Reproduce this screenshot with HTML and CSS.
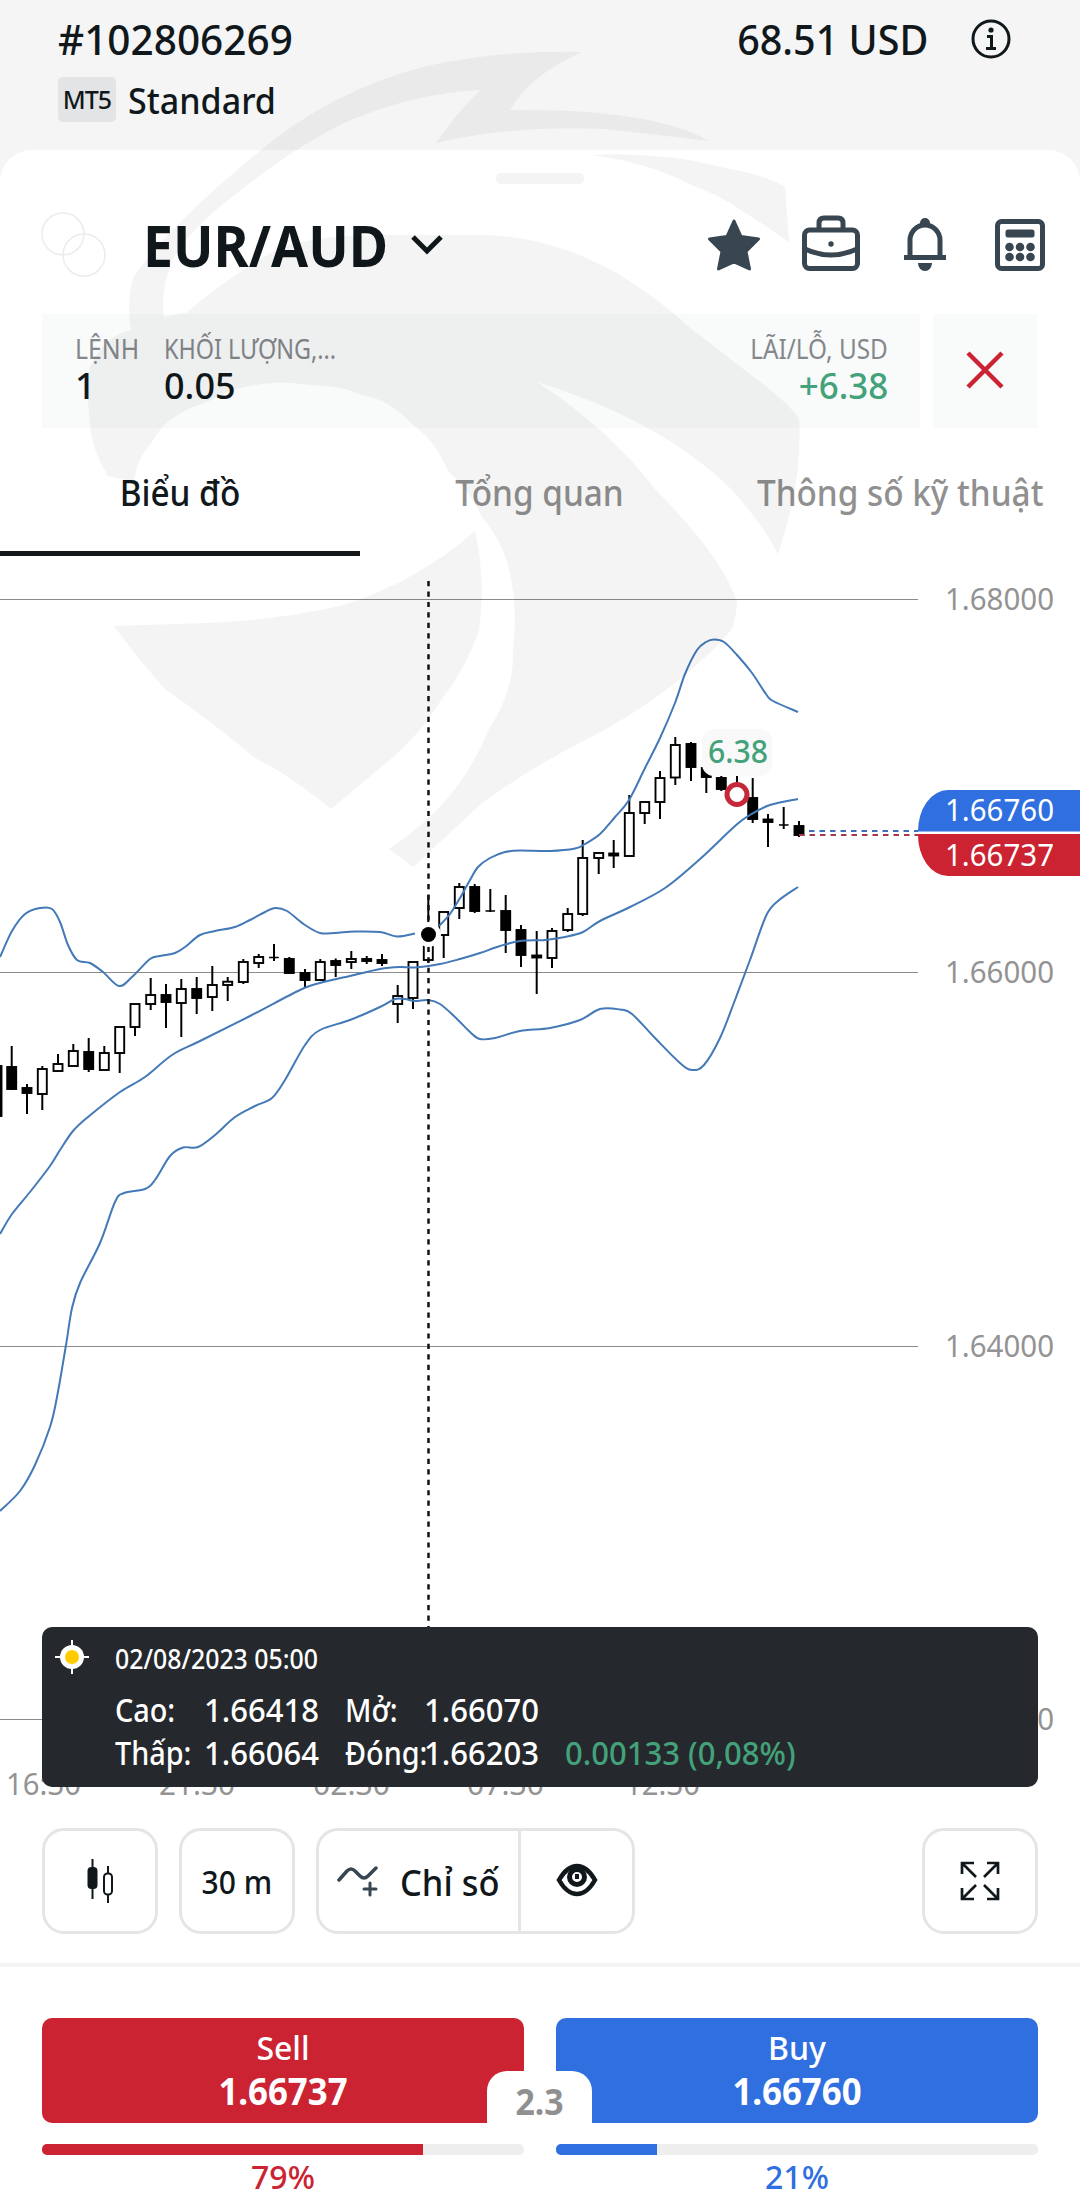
FILE: index.html
```
<!DOCTYPE html>
<html lang="vi">
<head>
  <meta charset="UTF-8">
  <meta name="viewport" content="width=device-width, initial-scale=1.0">
  <title>EUR/AUD</title>
  <link rel="stylesheet" href="styles.css">
</head>
<body>

<header class="account">
  <div class="account-row">
    <span class="account-id">#102806269</span>
    <span class="balance">68.51 USD</span>
    <svg class="info" width="40" height="40" viewBox="0 0 40 40">
      <circle cx="20" cy="20" r="18" fill="none" stroke="#10181c" stroke-width="3"/>
      <circle cx="20" cy="11" r="2.6" fill="#10181c"/>
      <path d="M16 17.5h4.5V29M15 29.5h10" fill="none" stroke="#10181c" stroke-width="3"/>
    </svg>
  </div>
  <div class="account-type">
    <span class="badge">MT5</span>
    <span class="type-name">Standard</span>
  </div>
</header>

<main class="sheet">
  <div class="handle"></div>

  <div class="pair">
    <svg class="flags" width="66" height="66" viewBox="0 0 66 66" fill="none" stroke="#ececec" stroke-width="1.5">
      <circle cx="22" cy="22" r="21"/>
      <circle cx="43" cy="43" r="21"/>
    </svg>
    <h1>EUR/AUD</h1>
    <svg class="chevron" width="32" height="22" viewBox="0 0 32 22">
      <path d="M2 3L16 17L30 3" fill="none" stroke="#10181c" stroke-width="5"/>
    </svg>
    <div class="pair-icons">
      <svg width="54" height="52" viewBox="0 0 54 52">
        <path d="M27 2L34 17.500L51.500 20L39 32.500L42.500 50L27 43L11.500 50L15 32.500L2.500 20L20 17.500Z" fill="#384651" stroke="#384651" stroke-width="3" stroke-linejoin="round"/>
      </svg>
      <svg width="58" height="56" viewBox="0 0 58 56" fill="none" stroke="#384651" stroke-width="5">
        <rect x="2.500" y="15" width="53" height="38.500" rx="5"/>
        <path d="M17 15V8q0-5 5-5h14q5 0 5 5v7M3 34q26 12 52 0"/>
        <circle cx="29" cy="29" r="2.700" fill="#384651" stroke="none"/>
      </svg>
      <svg width="42" height="54" viewBox="0 0 42 54">
        <path d="M6 38V22a15 15 0 0 1 30 0v16" fill="none" stroke="#384651" stroke-width="5"/>
        <path d="M0 37h42v5H0zM14 45h14a7 8 0 0 1-14 0zM16 8V5a5 5 0 0 1 10 0v3z" fill="#384651"/>
      </svg>
      <svg width="50" height="52" viewBox="0 0 50 52">
        <rect x="2.500" y="2.500" width="45" height="47" rx="4" fill="none" stroke="#384651" stroke-width="5"/>
        <rect x="10.500" y="10.500" width="29" height="8" rx="2.500" fill="#384651"/>
        <g fill="#384651">
          <circle cx="14.500" cy="28" r="4.300"/><circle cx="25" cy="28" r="4.300"/><circle cx="35.500" cy="28" r="4.300"/>
          <circle cx="14.500" cy="38" r="4.300"/><circle cx="25" cy="38" r="4.300"/><circle cx="35.500" cy="38" r="4.300"/>
        </g>
      </svg>
    </div>
  </div>

  <div class="orders">
    <div class="order-card">
      <div class="order-col col-count">
        <span class="label">LỆNH</span>
        <span class="value">1</span>
      </div>
      <div class="order-col col-volume">
        <span class="label">KHỐI LƯỢNG,...</span>
        <span class="value">0.05</span>
      </div>
      <div class="order-col profit">
        <span class="label">LÃI/LỖ, USD</span>
        <span class="value">+6.38</span>
      </div>
    </div>
    <button class="close-order">
      <svg width="40" height="40" viewBox="0 0 40 40">
        <path d="M3 3L37 37M37 3L3 37" stroke="#cb2331" stroke-width="4.500"/>
      </svg>
    </button>
  </div>

  <nav class="tabs">
    <a class="tab active"><span>Biểu đồ</span></a>
    <a class="tab"><span>Tổng quan</span></a>
    <a class="tab"><span>Thông số kỹ thuật</span></a>
  </nav>

  <div class="chart">
    <svg id="chart" width="1080" height="1254" viewBox="0 556 1080 1254">
      <g stroke="#8c8c8c" stroke-width="1">
        <path d="M0 599.500H918M0 972.500H918M0 1346.500H918M0 1719.500H918"/>
      </g>
      <g class="axis">
        <text x="945" y="610" textLength="109" lengthAdjust="spacingAndGlyphs">1.68000</text>
        <text x="945" y="983" textLength="109" lengthAdjust="spacingAndGlyphs">1.66000</text>
        <text x="945" y="1357" textLength="109" lengthAdjust="spacingAndGlyphs">1.64000</text>
        <text x="945" y="1730" textLength="109" lengthAdjust="spacingAndGlyphs">1.62000</text>
        <text x="6" y="1795" textLength="75" lengthAdjust="spacingAndGlyphs">16:30</text>
        <text x="159" y="1795" textLength="76" lengthAdjust="spacingAndGlyphs">21:30</text>
        <text x="313" y="1795" textLength="77" lengthAdjust="spacingAndGlyphs">02:30</text>
        <text x="467" y="1795" textLength="77" lengthAdjust="spacingAndGlyphs">07:30</text>
        <text x="625" y="1795" textLength="75" lengthAdjust="spacingAndGlyphs">12:30</text>
      </g>
      <g id="candles"></g>
      <g id="bands"></g>
      <path d="M428.500 581V1630" stroke="#111" stroke-width="2.500" stroke-dasharray="5.200 5.250"/>
      <circle cx="428.500" cy="934.500" r="12.500" fill="#fff"/>
      <circle cx="428.500" cy="934.500" r="7.500" fill="#000"/>
      <path d="M809 831H918" stroke="#3f6fb8" stroke-width="2" stroke-dasharray="5.500 5"/>
      <path d="M799 835H918" stroke="#a2384a" stroke-width="2" stroke-dasharray="5.500 5"/>
      <rect x="702" y="729" width="70" height="47" rx="12" fill="#f9f9f9"/>
      <text class="deal" x="708" y="763" textLength="60" lengthAdjust="spacingAndGlyphs">6.38</text>
      <circle cx="737" cy="794.500" r="10" fill="#fff" stroke="#c62839" stroke-width="5"/>
      <path d="M1080 790H948A30 41 0 0 0 918 831.500H1080Z" fill="#2f6fdf"/>
      <path d="M1080 834H918A30 41 0 0 0 948 876H1080Z" fill="#cb2331"/>
      <g class="price">
        <text x="945" y="821" textLength="109" lengthAdjust="spacingAndGlyphs">1.66760</text>
        <text x="945" y="866" textLength="109" lengthAdjust="spacingAndGlyphs">1.66737</text>
      </g>
    </svg>

    <div class="tooltip">
      <svg class="sun" width="36" height="36" viewBox="0 0 36 36">
        <path d="M18 1V35M1 18H35" stroke="#fff" stroke-width="2"/>
        <circle cx="18" cy="18" r="12" fill="#fff"/>
        <circle cx="18" cy="18" r="7" fill="#fc0"/>
      </svg>
      <div class="ohlc">
        <div class="date">02/08/2023 05:00</div>
        <div class="ohlc-grid">
          <span class="name">Cao:</span><span>1.66418</span><span class="name">Mở:</span><span>1.66070</span><span></span>
          <span class="name">Thấp:</span><span>1.66064</span><span class="name">Đóng:</span><span>1.66203</span><span class="change">0.00133 (0,08%)</span>
        </div>
      </div>
    </div>
  </div>

  <div class="toolbar">
    <button class="tool">
      <svg width="28" height="44" viewBox="0 0 28 44" fill="none" stroke="#10181c" stroke-width="2">
        <path d="M6.500 0V40M22 7V14M22 36V44"/>
        <rect x="2.500" y="9" width="8" height="20" rx="3" fill="#10181c"/>
        <rect x="18" y="14.500" width="8" height="21" rx="3.500"/>
      </svg>
    </button>
    <button class="tool"><span class="period">30 m</span></button>
    <div class="tool-group">
      <button class="indicators">
        <svg width="42" height="32" viewBox="0 0 42 32" fill="none" stroke="#384651" stroke-width="3.500" stroke-linecap="round">
          <path d="M2 15L10 6Q14 2 18 6L23 11Q27 15 31 11L39 3"/>
          <path d="M33 18V30M27 24H39" stroke-width="3"/>
        </svg>
        <span>Chỉ số</span>
      </button>
      <button class="eye">
        <svg width="42" height="34" viewBox="0 0 42 34">
          <path d="M3 17Q11 3 21 3T39 17Q31 31 21 31T3 17Z" fill="none" stroke="#10181c" stroke-width="4.500"/>
          <circle cx="21" cy="14" r="7.500" fill="none" stroke="#10181c" stroke-width="5"/>
          <path d="M21 11V16" stroke="#10181c" stroke-width="4"/>
        </svg>
      </button>
    </div>
    <button class="tool expand">
      <svg width="40" height="40" viewBox="0 0 40 40" fill="none" stroke="#10181c" stroke-width="2.700">
        <path d="M2 13V2H14M2 2L16 16M27 2H38V13M38 2L24 16M2 27V38H14M2 38L16 24M38 27V38H27M38 38L24 24"/>
      </svg>
    </button>
  </div>
</main>

<footer class="trade">
  <div class="trade-buttons">
    <button class="sell"><span>Sell</span><b>1.66737</b></button>
    <button class="buy"><span>Buy</span><b>1.66760</b></button>
    <div class="spread"><span>2.3</span></div>
  </div>
  <div class="sentiment">
    <div class="side red">
      <div class="bar"><div class="fill" style="width: 79%"></div></div>
      <span>79%</span>
    </div>
    <div class="side blue">
      <div class="bar"><div class="fill" style="width: 21%"></div></div>
      <span>21%</span>
    </div>
  </div>
</footer>

<!-- eagle watermark -->
<svg class="watermark" width="1080" height="900" viewBox="0 0 1080 900">
  <path d="M582 52Q500 50 427 66Q331 90 255 155Q170 225 134 276Q126 300 131 330L165 325Q158 290 175 255Q195 225 227 201Q289 150 344 123Q413 93 480 90Q455 115 436 143Q510 125 606 129L710 141Q650 108 510 110Q530 75 582 52Z"/>
  <path d="M592 155Q640 153 689 160L730 169Q765 175 785 187L789 242Q765 225 744 212Q720 195 689 184Q650 163 592 155Z"/>
  <path d="M131 330Q150 318 186 313Q230 275 282 247Q320 235 386 235H482Q550 235 620 275Q660 300 689 327L764 385Q790 405 799 419Q803 480 778 554Q760 520 730 488Q660 420 537 382Q610 430 654 488Q725 560 737 603Q735 625 730 631Q710 655 675 683Q630 718 585 740Q530 768 482 803L413 867L389 849Q425 825 448 798Q475 765 489 729Q515 690 513 649Q518 610 510 574Q505 545 482 517Q470 490 448 471Q435 440 413 425Q390 400 365 396Q340 385 310 385Q280 380 255 385Q230 388 207 402Q165 415 152 442Q136 460 134 482L108 476Q92 450 90 425Q86 395 90 367Q105 335 131 330Z"/>
  <path d="M114 626L207 623Q280 620 344 605Q420 580 475 531Q486 580 479 631Q465 670 441 700Q420 735 386 763L331 809Q290 775 255 758Q210 720 165 689Q135 655 114 626Z"/>
</svg>

<script>
  // [x, body top, body bottom, high, low, filled]
  const candles = [
    [-3, 1066, 1116, 1066, 1116, 1],
    [11.7, 1067, 1089, 1046, 1090, 1],
    [27, 1088, 1093, 1084, 1114, 1],
    [42.3, 1069, 1094, 1066, 1110, 0],
    [58, 1064, 1071, 1054, 1072, 0],
    [73.3, 1051, 1066, 1044, 1066, 0],
    [88.7, 1052, 1069, 1038, 1072, 1],
    [104.3, 1053, 1070, 1046, 1070, 0],
    [119.7, 1027, 1053, 1027, 1073, 0],
    [135, 1004, 1027, 1004, 1036, 0],
    [150.7, 995, 1004, 978, 1010, 0],
    [166, 995, 1002, 984, 1028, 1],
    [181.3, 989, 1003, 979, 1037, 0],
    [196.7, 989, 998, 977, 1014, 1],
    [212.3, 985, 997, 966, 1011, 0],
    [227.7, 981.7, 985, 977, 1001, 0],
    [243.3, 962, 982, 959, 984, 0],
    [258.7, 957, 963, 954, 968, 0],
    [274, 957, 958, 944, 961, 1],
    [289.3, 959, 973, 957, 974, 1],
    [305, 973, 980, 969, 987, 1],
    [320.3, 962, 980, 959, 981, 0],
    [335.7, 961, 965, 958.500, 977, 1],
    [351.3, 959, 962, 951, 969, 0],
    [366.7, 959, 961, 956, 964, 1],
    [382, 960, 963, 954, 966, 1],
    [397.7, 996, 1004, 985, 1023, 0],
    [413, 962, 998, 962, 1009, 0],
    [428.300, 936, 960, 895, 963, 0],
    [443.7, 912, 935, 912, 958, 0],
    [459.3, 887, 908, 883, 919, 0],
    [474.7, 887, 911, 884, 913, 1],
    [490.3, 910.5, 911.5, 889, 912, 1],
    [505.7, 911, 930, 895, 953, 1],
    [521, 930, 955, 925, 967, 1],
    [536.7, 955.5, 957.5, 931, 994, 1],
    [552, 931, 958, 928, 968, 0],
    [567.7, 914, 930, 908, 932, 0],
    [582.7, 858, 914, 840, 916, 0],
    [598.7, 853, 858, 853, 874, 0],
    [613.7, 853.5, 855.5, 840, 868, 1],
    [629.3, 813, 856, 795, 856, 0],
    [644.7, 802, 813, 802, 824, 0],
    [660, 778, 802, 771, 819, 0],
    [675.3, 745, 777.5, 737, 785, 0],
    [691, 744, 767, 742, 781, 1],
    [706.3, 768, 777, 768, 793, 1],
    [721.3, 778, 789, 776, 791, 1],
    [737, 790, 797, 776, 800, 1],
    [752.7, 798, 819, 778, 823, 1],
    [768, 819.500, 822, 814, 847, 1],
    [783.7, 824.5, 825.5, 807, 829, 1],
    [799, 826, 835, 821, 837, 1]
  ];

  const bands = [
    [[0,957],[12,931],[25,914],[40,908],[52,909],[60,922],[68,945],[77,960],[90,963],[103,972],[119,986],[132,977],[150,959],[160,956],[175,953],[185,947],[200,935],[215,931],[235,927],[250,920],[265,912],[275,908],[287,911],[305,925],[320,933],[335,933],[355,931.5],[380,932],[397,936.5],[415,933.5]],
    [[439,926],[450,914],[460,898],[470,880],[478,867],[490,858],[505,852],[520,850.5],[550,851],[575,848.5],[585,844],[600,834],[615,817],[629,800],[645,768],[660,738],[675,703],[685,674],[697,650],[706,642],[714,639.5],[724,642],[737,655],[752,673],[766,694],[773,701],[798,712]],
    [[0,1234],[12,1214],[30,1192],[50,1166],[60,1150],[73,1131],[88,1117],[120,1092],[145,1077],[172,1055],[200,1041],[250,1016],[300,990],[320,983],[350,976],[380,969],[400,967],[415,967.5],[440,964],[460,959],[480,953],[500,946],[520,941],[545,940],[565,937],[583,932],[600,921],[630,907],[665,888],[700,859],[735,826],[750,815],[770,805],[798,799]],
    [[0,1511],[20,1491],[35,1465],[50,1427],[57,1397],[66,1345],[72,1308],[80,1283],[100,1243],[115,1202],[124,1193],[145,1189],[155,1180],[170,1156],[183,1147.5],[198,1147],[215,1135],[235,1117],[255,1106],[272,1098],[285,1080],[305,1045],[320,1030],[350,1020],[380,1007],[395,999],[405,999],[415,1001],[428,1000],[440,1004],[455,1017],[470,1032],[480,1039],[495,1038],[520,1031],[550,1028],[580,1020],[600,1009],[620,1009.5],[632,1014],[655,1038],[680,1063],[692,1070],[704,1065],[720,1038],[735,1000],[750,960],[766,916],[778,901],[798,887]]
  ];

  function smooth(p) {
    let d = `M${p[0]}`;
    for (let i = 0; i < p.length - 1; i++) {
      const a = p[i - 1] || p[i], b = p[i], c = p[i + 1], e = p[i + 2] || c;
      d += `C${b[0] + (c[0] - a[0]) / 6} ${b[1] + (c[1] - a[1]) / 6} ${c[0] - (e[0] - b[0]) / 6} ${c[1] - (e[1] - b[1]) / 6} ${c[0]} ${c[1]}`;
    }
    return d;
  }

  document.getElementById('candles').innerHTML = candles.map(([x, top, bottom, high, low, filled]) =>
    `<path d="M${x} ${high}V${low}" stroke="#000" stroke-width="2"/>
     <rect x="${x - 4.5}" y="${top}" width="9" height="${bottom - top}" stroke="#000" stroke-width="${bottom - top < 2 ? 0.5 : 1.9}" fill="${filled ? '#000' : '#fff'}"/>`
  ).join('');

  document.getElementById('bands').innerHTML = bands.map(p =>
    `<path d="${smooth(p)}" fill="none" stroke="#4479b8" stroke-width="2"/>`
  ).join('');
</script>

</body>
</html>
```
FILE: styles.css
```
* {
  box-sizing: border-box;
}
body {
  margin: 0;
  width: 1080px;
  height: 2198px;
  overflow: hidden;
  position: relative;
  background: #f5f5f5;
  color: #10181c;
  font-family: "Noto Sans", "Open Sans", sans-serif;
  line-height: 1;
}
button {
  font: inherit;
  color: inherit;
  border: none;
  background: none;
  padding: 0;
}
.account {
  height: 150px;
  padding: 14px 69px 0 58px;
}
.account-row {
  display: flex;
  align-items: center;
  height: 50px;
  font-size: 42px;
  font-weight: 500;
}
.account-id {
  transform: scaleX(0.965);
  transform-origin: left;
}
.balance {
  margin-left: auto;
  transform: scaleX(0.94);
  transform-origin: right;
}
.info {
  margin-left: 43px;
}
.account-type {
  display: flex;
  align-items: center;
  height: 45px;
  margin-top: 13px;
}
.badge {
  width: 58px;
  height: 45px;
  line-height: 45px;
  border-radius: 5px;
  background: #e3e4e5;
  text-align: center;
  font-size: 25px;
  font-weight: 500;
  letter-spacing: -1px;
}
.type-name {
  margin-left: 12px;
  font-size: 37px;
  font-weight: 500;
  transform: scaleX(0.92);
  transform-origin: left;
}
.sheet {
  height: 1813px;
  background: #fff;
  border-radius: 32px 32px 0 0;
  overflow: hidden;
}
.handle {
  width: 88px;
  height: 11px;
  margin: 23px auto 0;
  border-radius: 5px;
  background: #f4f4f4;
}
.pair {
  display: flex;
  align-items: center;
  height: 100px;
  margin-top: 11px;
  padding: 0 35px 0 41px;
}
.pair h1 {
  width: 242px;
  margin: 0 0 0 36px;
  font-size: 58px;
  font-weight: 700;
  transform: scaleX(0.925);
  transform-origin: left;
}
.chevron {
  margin-left: 26px;
}
.pair-icons {
  display: flex;
  align-items: center;
  margin-left: auto;
}
.pair-icons svg:nth-child(2) {
  margin: 0 44px 4px 41px;
}
.pair-icons svg:nth-child(4) {
  margin-left: 49px;
}
.orders {
  display: flex;
  gap: 13px;
  height: 114px;
  margin: 19px 43px 0 42px;
}
.order-card {
  display: flex;
  flex: 1;
  padding: 19px 32px 0 33px;
  background: #f9fafa;
}
.close-order {
  width: 104px;
  background: #f9fafa;
}
.order-col {
  display: flex;
  flex-direction: column;
}
.col-count {
  width: 89px;
}
.label {
  font-size: 27px;
  line-height: 32px;
  color: #84888c;
  transform: scaleX(0.92);
  transform-origin: left;
}
.col-volume .label {
  transform: scaleX(0.865);
}
.value {
  margin-top: 1px;
  font-size: 36px;
  line-height: 40px;
  font-weight: 500;
}
.profit {
  margin-left: auto;
  align-items: flex-end;
}
.profit .label {
  transform: scaleX(0.9);
  transform-origin: right;
}
.profit .value {
  color: #43a27a;
  transform: scaleX(0.97);
  transform-origin: right;
}
.tabs {
  display: grid;
  grid-template-columns: repeat(3, 360px);
  height: 128px;
}
.tab {
  display: flex;
  justify-content: center;
  padding-top: 45px;
  font-size: 37px;
  font-weight: 500;
  color: #909090;
  white-space: nowrap;
}
.tab span {
  transform: scaleX(0.9);
}
.tab.active {
  color: #10181c;
  border-bottom: 5px solid #14181b;
}
.chart {
  position: relative;
  height: 1254px;
}
.chart > svg {
  display: block;
}
.axis, .price {
  font-size: 31px;
  fill: #939393;
}
.price {
  fill: #fff;
}
.deal {
  font-size: 32px;
  font-weight: 500;
  fill: #43a27a;
}
.tooltip {
  position: absolute;
  left: 42px;
  right: 42px;
  top: 1071px;
  height: 160px;
  display: flex;
  padding: 12px;
  border-radius: 10px;
  background: #25292d;
  color: #fff;
}
.ohlc {
  margin: 6px 0 0 25px;
}
.date {
  font-size: 27px;
  font-weight: 500;
  transform: scaleX(0.92);
  transform-origin: left;
}
.ohlc-grid {
  display: grid;
  grid-template-columns: 89px 141px 79px 141px auto;
  margin-top: 16px;
  font-size: 32px;
  font-weight: 500;
  line-height: 43px;
  white-space: nowrap;
}
.ohlc-grid span {
  transform: scaleX(0.97);
  transform-origin: left;
}
.ohlc-grid .name {
  transform: scaleX(0.9);
}
.ohlc-grid .change {
  color: #43a27a;
}
.toolbar {
  display: flex;
  gap: 21px;
  height: 106px;
  margin: 18px 42px 0;
}
.tool, .tool-group {
  display: flex;
  align-items: center;
  justify-content: center;
  width: 116px;
  border: 3px solid #e5e5e5;
  border-radius: 22px;
  background: #fff;
}
.tool-group {
  width: 319px;
}
.period {
  font-size: 33px;
  font-weight: 500;
  transform: scaleX(0.91);
}
.indicators {
  display: flex;
  align-items: center;
  width: 202px;
  height: 100%;
  padding-left: 18px;
  font-size: 37px;
  font-weight: 500;
  border-right: 3px solid #e5e5e5;
}
.indicators span {
  margin-left: 21px;
  white-space: nowrap;
  transform: scaleX(0.93);
  transform-origin: left;
}
.eye {
  flex: 1;
}
.expand {
  margin-left: auto;
}
.trade {
  height: 235px;
  padding: 51px 42px 0;
  background: #fff;
  border-top: 4px solid #f4f4f4;
}
.trade-buttons {
  position: relative;
  display: flex;
  gap: 32px;
  height: 105px;
}
.sell, .buy {
  flex: 1;
  border-radius: 10px;
  color: #fff;
}
.sell {
  background: #cb2331;
}
.buy {
  background: #2f6fdf;
}
.sell span, .buy span {
  display: block;
  margin-top: -3px;
  font-size: 32px;
  font-weight: 500;
  line-height: 42px;
}
.sell b, .buy b {
  display: block;
  font-size: 37px;
  line-height: 43px;
  transform: scaleX(0.94);
}
.spread {
  position: absolute;
  left: 445px;
  bottom: 0;
  width: 105px;
  height: 52px;
  border-radius: 20px 20px 0 0;
  background: #fff;
  color: #909090;
  font-size: 36px;
  font-weight: 700;
  line-height: 61px;
  text-align: center;
}
.spread span {
  display: block;
  transform: scaleX(0.94);
}
.sentiment {
  display: flex;
  gap: 32px;
  margin-top: 21px;
}
.side {
  flex: 1;
  text-align: center;
  font-size: 32px;
  font-weight: 500;
}
.side > span {
  display: block;
  line-height: 44px;
}
.bar {
  height: 11px;
  border-radius: 5px;
  background: #eee;
  overflow: hidden;
}
.fill {
  height: 100%;
}
.red {
  color: #cb2331;
}
.blue {
  color: #2f6fdf;
}
.red .fill {
  background: #cb2331;
}
.blue .fill {
  background: #2f6fdf;
}
.watermark {
  position: absolute;
  left: 0;
  top: 0;
  opacity: 0.038;
  pointer-events: none;
}
```
